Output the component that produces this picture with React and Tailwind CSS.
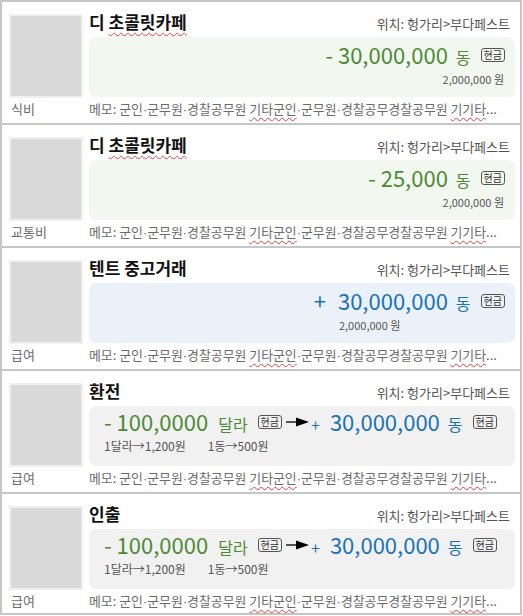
import React from "react";

const Sp = ({ children }) => (
  <span className="underline decoration-wavy decoration-[#e0403f] decoration-1 underline-offset-[3px]">
    {children}
  </span>
);

const Dot = () => <span className="font-['Liberation_Sans',sans-serif]">·</span>;

const Badge = () => (
  <span className="inline-flex items-center justify-center h-[14px] px-[2px] border border-[#555] rounded-[3px] text-[10px] leading-none text-[#333] self-center">
    현금
  </span>
);

const Arrow = () => (
  <svg width="24" height="12" viewBox="0 0 24 12" className="self-center ml-[4px] mr-[1px]">
    <line x1="0" y1="6" x2="12" y2="6" stroke="#000" strokeWidth="1.3" />
    <polygon points="10,1.5 23,6 10,10.5" fill="#000" />
  </svg>
);

const Memo = () => (
  <>
    메모: 군인<Dot />군무원<Dot />경찰공무원 <Sp>기타군인</Sp><Dot />군무원<Dot />경찰공무경찰공무원 <Sp>기기타</Sp>...
  </>
);

function Out({ amount }) {
  return (
    <div className="h-[60px] rounded-[7px] bg-[#f2f7ef] flex flex-col items-end pr-[10px] pt-[3px]">
      <div className="flex items-baseline text-[#4d8a35]">
        <span className="text-[22px] leading-[28px]">- {amount}</span>
        <span className="text-[16px] ml-[8px] mr-[10px]">동</span>
        <Badge />
      </div>
      <div className="text-[11px] leading-[16px] text-[#555] mt-[2px] mr-[1px]">2,000,000 원</div>
    </div>
  );
}

function In() {
  return (
    <div className="h-[60px] rounded-[7px] bg-[#eaf1f9] flex justify-end pr-[10px] pt-[3px] text-[#1b72b5]">
      <span className="text-[22px] leading-[28px] mr-[12px]">+</span>
      <div className="flex flex-col items-start">
        <div className="flex items-baseline">
          <span className="text-[22px] leading-[28px]">30,000,000</span>
          <span className="text-[16px] ml-[8px] mr-[10px]">동</span>
          <Badge />
        </div>
        <div className="text-[11px] leading-[16px] text-[#555] mt-[2px] ml-[1px]">2,000,000 원</div>
      </div>
    </div>
  );
}

function Exchange() {
  return (
    <div className="h-[60px] rounded-[7px] bg-[#f1f1f1] flex flex-col items-start pl-[15px] pt-[1px]">
      <div className="flex items-baseline">
        <span className="text-[22px] leading-[28px] text-[#4d8a35]">- 100,0000</span>
        <span className="text-[16px] ml-[10px] mr-[10px] text-[#4d8a35]">달라</span>
        <Badge />
        <Arrow />
        <span className="text-[16px] text-[#1b72b5] mr-[10px]">+</span>
        <span className="text-[22px] leading-[28px] text-[#1b72b5]">30,000,000</span>
        <span className="text-[16px] ml-[8px] mr-[10px] text-[#1b72b5]">동</span>
        <Badge />
      </div>
      <div className="flex text-[12px] leading-[16px] text-[#555] mt-[2px] gap-[22px]">
        <span>1달라→1,200원</span>
        <span>1동→500원</span>
      </div>
    </div>
  );
}

function Card({ cat, title, children, last }) {
  return (
    <div
      className={`h-[123px] border-t-2 border-x-2 border-[#c6c6c6] pt-[9px] pl-[7px] pr-[5px] ${
        last ? "border-b-2" : ""
      }`}
    >
      <div className="flex gap-[6px]">
        <div className="w-[74px] h-[84px] mt-[3px] bg-[#d9d9d9] border-2 border-[#f0f0f0] shrink-0" />
        <div className="flex-1 flex flex-col">
          <div className="h-[26px] flex justify-between items-baseline">
            <span className="text-[17px] leading-[22px] font-bold text-[#111]">{title}</span>
            <span className="text-[13px] leading-[16px] text-[#555] mr-[5px]">위치: 헝가리&gt;부다페스트</span>
          </div>
          {children}
        </div>
      </div>
      <div className="flex gap-[6px] mt-[3px] text-[12.9px] leading-[16px] text-[#6b6b6b]">
        <span className="w-[74px] pl-[2px] shrink-0 text-[13px]">{cat}</span>
        <span className="whitespace-nowrap">
          <Memo />
        </span>
      </div>
    </div>
  );
}

export default function App() {
  return (
    <div className="w-[522px] bg-white overflow-hidden font-['Noto_Sans_CJK_KR','Noto_Sans',sans-serif]">
      <Card cat="식비" title={<>디 <Sp>초콜릿카페</Sp></>}>
        <Out amount="30,000,000" />
      </Card>
      <Card cat="교통비" title={<>디 <Sp>초콜릿카페</Sp></>}>
        <Out amount="25,000" />
      </Card>
      <Card cat="급여" title="텐트 중고거래">
        <In />
      </Card>
      <Card cat="급여" title="환전">
        <Exchange />
      </Card>
      <Card cat="급여" title="인출" last>
        <Exchange />
      </Card>
    </div>
  );
}
